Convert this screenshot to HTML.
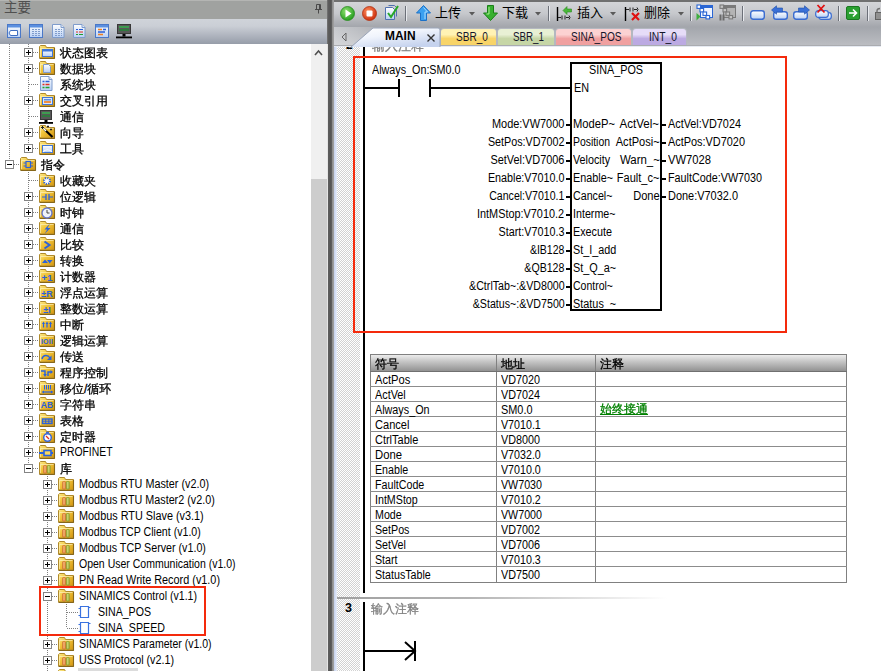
<!DOCTYPE html>
<html lang="zh"><head><meta charset="utf-8"><title>STEP 7-Micro/WIN SMART</title><style>
html,body{margin:0;padding:0;}
body{width:881px;height:671px;overflow:hidden;background:#fff;position:relative;
 font-family:"Liberation Sans","WenQuanYi Zen Hei",sans-serif;font-size:11px;color:#000;}
div,span,svg{position:absolute;box-sizing:border-box;}
svg{overflow:visible;}
.t{white-space:nowrap;line-height:14px;height:14px;}
.cj{font-family:"Liberation Sans","WenQuanYi Zen Hei",sans-serif;font-size:12px;-webkit-text-stroke:0.3px currentColor;}
.r{text-align:right;}
.yh{font-family:"Liberation Sans","Noto Sans CJK SC",sans-serif;font-size:13px;-webkit-text-stroke:0;}
</style></head><body>
<svg width="0" height="0" style="left:0;top:0"><defs>
<linearGradient id="gf" x1="0" y1="0" x2="1" y2="1"><stop offset="0" stop-color="#fbea90"/><stop offset="0.38" stop-color="#f3c73c"/><stop offset="1" stop-color="#d29410"/></linearGradient>
<linearGradient id="gb" x1="0" y1="0" x2="0" y2="1"><stop offset="0" stop-color="#ffffff"/><stop offset="1" stop-color="#b9d0f4"/></linearGradient>
<linearGradient id="gw" x1="0" y1="0" x2="0" y2="1"><stop offset="0" stop-color="#6fa0e8"/><stop offset="1" stop-color="#3b6fcc"/></linearGradient>
<radialGradient id="gg" cx="0.4" cy="0.35" r="0.7"><stop offset="0" stop-color="#8fe070"/><stop offset="1" stop-color="#1f9a1a"/></radialGradient>
<radialGradient id="gr" cx="0.4" cy="0.35" r="0.7"><stop offset="0" stop-color="#ff9060"/><stop offset="1" stop-color="#c82808"/></radialGradient>
<linearGradient id="gm" x1="0" y1="0" x2="0.6" y2="1"><stop offset="0" stop-color="#ffffff"/><stop offset="0.45" stop-color="#f0f4fc"/><stop offset="1" stop-color="#c6d3ee"/></linearGradient>
</defs></svg>
<div style="left:0px;top:0px;width:327px;height:19px;background:#a0a2a0;border-top:1px solid #b4b5b3;"></div>
<span class="t cj yh" style="left:4px;top:1px;color:#505050;font-size:13.5px;">主要</span>
<svg style="left:314px;top:3px" width="10" height="11" viewBox="0 0 10 11"><path d="M2.5 1.5h4v5h-4z M1 6.5h7 M4.5 6.5v4" fill="none" stroke="#4a4a4a" stroke-width="1"/><path d="M5.5 1.5v5" stroke="#4a4a4a" stroke-width="1"/></svg>
<div style="left:0px;top:19px;width:327px;height:25px;background:linear-gradient(#cfd3d9 0%,#cbcfd6 28%,#b2b7c1 62%,#969da9 100%);"></div>
<svg style="left:7px;top:24px" width="14" height="14" viewBox="0 0 14 14"><rect x="0.5" y="0.5" width="13" height="13" fill="url(#gb)" stroke="#4a78c8"/><rect x="1" y="1" width="12" height="2.5" fill="#5b8fe0"/><path d="M3.5 6.5h7v5h-7l-1.5-2.5z" fill="#fff" stroke="#3f6ec0"/></svg>
<svg style="left:29px;top:24px" width="14" height="14" viewBox="0 0 14 14"><rect x="0.5" y="0.5" width="13" height="13" fill="url(#gb)" stroke="#4a78c8"/><rect x="1" y="1" width="12" height="2.5" fill="#5b8fe0"/><path d="M3 5.5h8M3 7.5h8M3 9.5h8M3 11.5h8" stroke="#7f9ccc" stroke-width="1" stroke-dasharray="2 1"/></svg>
<svg style="left:52px;top:24px" width="13" height="14" viewBox="0 0 13 14"><path d="M0.5 0.5h8.5l3 3v10h-11.5z" fill="url(#gb)" stroke="#7f9ccc"/><path d="M9 0.5v3h3" fill="#dfe9fa" stroke="#7f9ccc"/><path d="M3 5.5h7M3 7.5h7M3 9.5h7M3 11.5h7" stroke="#7f9ccc" stroke-width="1" stroke-dasharray="2 1"/></svg>
<svg style="left:73px;top:24px" width="13" height="14" viewBox="0 0 13 14"><path d="M0.5 0.5h8.5l3 3v10h-11.5z" fill="url(#gb)" stroke="#7f9ccc"/><path d="M9 0.5v3h3" fill="#dfe9fa" stroke="#7f9ccc"/><path d="M3 5.5h2" stroke="#2a60d8"/><path d="M6 5.5h4" stroke="#2a60d8"/><path d="M3 8h2M6 8h4" stroke="#e03020"/><path d="M3 10.5h2M6 10.5h4" stroke="#20a030"/></svg>
<svg style="left:95px;top:24px" width="14" height="14" viewBox="0 0 14 14"><rect x="0.5" y="0.5" width="13" height="13" fill="url(#gb)" stroke="#4a78c8"/><rect x="1" y="1" width="12" height="2.5" fill="#5b8fe0"/><path d="M3 5.5h4M3 10.5h5" stroke="#f08020" stroke-width="1.4"/><path d="M8 5.5h3M3 8h7" stroke="#2a60d8" stroke-width="1.4"/></svg>
<svg style="left:116px;top:23px" width="16" height="16" viewBox="0 0 16 16"><rect x="1.5" y="1.5" width="13" height="9" fill="#585858" stroke="#383838"/><rect x="3" y="3" width="10" height="2" fill="#3e9c50"/><rect x="3" y="6" width="10" height="2" fill="#2f7a3e"/><rect x="6.5" y="11" width="3" height="2.5" fill="#000"/><rect x="0" y="13.5" width="16" height="1.8" fill="#000"/></svg>
<div style="left:0px;top:44px;width:327px;height:627px;background:#fff;"></div>
<div style="left:311px;top:44px;width:16px;height:627px;background:#f0f0f0;"></div>
<div style="left:311px;top:179px;width:16px;height:492px;background:#cdcdcd;"></div>
<svg style="left:314px;top:49px" width="9" height="8" viewBox="0 0 9 8"><path d="M1 6 L4.5 2 L8 6" fill="none" stroke="#505050" stroke-width="1.6"/></svg>
<div style="left:327px;top:0px;width:5px;height:671px;background:linear-gradient(90deg,#787878,#5c5c5c 30%,#565656 70%,#626262);"></div>
<div style="left:327px;top:44px;width:1px;height:627px;background:#e4e4e4;"></div>
<div style="left:332px;top:0px;width:2px;height:671px;background:linear-gradient(90deg,#888,#a4a4a4);"></div>
<div style="left:9px;top:44px;width:1px;height:120px;background-image:repeating-linear-gradient(180deg,#808080 0 1px,transparent 1px 2px);"></div>
<div style="left:28px;top:44px;width:1px;height:104px;background-image:repeating-linear-gradient(180deg,#808080 0 1px,transparent 1px 2px);"></div>
<div style="left:28px;top:172px;width:1px;height:296px;background-image:repeating-linear-gradient(180deg,#808080 0 1px,transparent 1px 2px);"></div>
<div style="left:47px;top:476px;width:1px;height:195px;background-image:repeating-linear-gradient(180deg,#808080 0 1px,transparent 1px 2px);"></div>
<div style="left:66px;top:604px;width:1px;height:24px;background-image:repeating-linear-gradient(180deg,#808080 0 1px,transparent 1px 2px);"></div>
<div style="left:29px;top:52px;width:10px;height:1px;background-image:repeating-linear-gradient(90deg,#808080 0 1px,transparent 1px 2px);"></div>
<svg style="left:24px;top:48px" width="9" height="9" viewBox="0 0 9 9"><rect x="0.5" y="0.5" width="8" height="8" fill="#fff" stroke="#848484"/><path d="M2 4.5h5 M4.5 2v5" stroke="#000" stroke-width="1"/></svg>
<svg style="left:39px;top:44px" width="16" height="16" viewBox="0 0 16 16"><path d="M0.5 2.5V14H15.5V3.5H7.5L6.5 1.5H1.5Z" fill="url(#gf)" stroke="#b08a2c" stroke-width="1"/><path d="M0.5 14.5H15.8M15.5 4V14.5" stroke="#86661a" stroke-width="1.1" fill="none"/><path d="M1.5 4.5H14.5M1.5 4.5V13" stroke="#fffbd8" stroke-width="1" opacity="0.55" fill="none"/><rect x="3.5" y="5.5" width="10" height="7" fill="url(#gb)" stroke="#3f76d8"/><rect x="4" y="6" width="9" height="1.5" fill="#3f76d8"/></svg>
<span class="t cj" style="left:60px;top:45.5px;">状态图表</span>
<div style="left:29px;top:68px;width:10px;height:1px;background-image:repeating-linear-gradient(90deg,#808080 0 1px,transparent 1px 2px);"></div>
<svg style="left:24px;top:64px" width="9" height="9" viewBox="0 0 9 9"><rect x="0.5" y="0.5" width="8" height="8" fill="#fff" stroke="#848484"/><path d="M2 4.5h5 M4.5 2v5" stroke="#000" stroke-width="1"/></svg>
<svg style="left:39px;top:60px" width="16" height="16" viewBox="0 0 16 16"><path d="M0.5 2.5V14H15.5V3.5H7.5L6.5 1.5H1.5Z" fill="url(#gf)" stroke="#b08a2c" stroke-width="1"/><path d="M0.5 14.5H15.8M15.5 4V14.5" stroke="#86661a" stroke-width="1.1" fill="none"/><path d="M1.5 4.5H14.5M1.5 4.5V13" stroke="#fffbd8" stroke-width="1" opacity="0.55" fill="none"/><path d="M4.5 4.5h5l2 2v6h-7z" fill="url(#gb)" stroke="#7f9ccc"/></svg>
<span class="t cj" style="left:60px;top:61.5px;">数据块</span>
<div style="left:29px;top:84px;width:10px;height:1px;background-image:repeating-linear-gradient(90deg,#808080 0 1px,transparent 1px 2px);"></div>
<svg style="left:40px;top:76px" width="13" height="15" viewBox="0 0 13 15"><path d="M0.5 0.5h8.5l3 3v11h-11.5z" fill="url(#gb)" stroke="#7f9ccc"/><path d="M9 0.5v3h3" fill="#dfe9fa" stroke="#7f9ccc"/><path d="M2.5 5.5h2M5.5 5.5h4" stroke="#2a60d8" stroke-width="1.3"/><path d="M2.5 8.5h2M5.5 8.5h4" stroke="#e03020" stroke-width="1.3"/><path d="M2.5 11.5h2M5.5 11.5h4" stroke="#20a030" stroke-width="1.3"/></svg>
<span class="t cj" style="left:60px;top:77.5px;">系统块</span>
<div style="left:29px;top:100px;width:10px;height:1px;background-image:repeating-linear-gradient(90deg,#808080 0 1px,transparent 1px 2px);"></div>
<svg style="left:24px;top:96px" width="9" height="9" viewBox="0 0 9 9"><rect x="0.5" y="0.5" width="8" height="8" fill="#fff" stroke="#848484"/><path d="M2 4.5h5 M4.5 2v5" stroke="#000" stroke-width="1"/></svg>
<svg style="left:39px;top:92px" width="16" height="16" viewBox="0 0 16 16"><path d="M0.5 2.5V14H15.5V3.5H7.5L6.5 1.5H1.5Z" fill="url(#gf)" stroke="#b08a2c" stroke-width="1"/><path d="M0.5 14.5H15.8M15.5 4V14.5" stroke="#86661a" stroke-width="1.1" fill="none"/><path d="M1.5 4.5H14.5M1.5 4.5V13" stroke="#fffbd8" stroke-width="1" opacity="0.55" fill="none"/><rect x="3.5" y="5.5" width="10" height="7" fill="#dce8fb" stroke="#3f76d8"/><rect x="5" y="9" width="7" height="2" fill="#f09040"/><rect x="5" y="7" width="7" height="1.5" fill="#5b8fe0"/></svg>
<span class="t cj" style="left:60px;top:93.5px;">交叉引用</span>
<div style="left:29px;top:116px;width:10px;height:1px;background-image:repeating-linear-gradient(90deg,#808080 0 1px,transparent 1px 2px);"></div>
<svg style="left:38px;top:109px" width="16" height="16" viewBox="0 0 16 16"><rect x="2.5" y="1.5" width="11" height="9" fill="#585858" stroke="#383838"/><rect x="4" y="3" width="8" height="2" fill="#3e9c50"/><rect x="4" y="6" width="8" height="2" fill="#2f7a3e"/><rect x="6.5" y="11" width="3" height="2.5" fill="#000"/><rect x="1" y="13" width="14" height="1.8" fill="#000"/></svg>
<span class="t cj" style="left:60px;top:109.5px;">通信</span>
<div style="left:29px;top:132px;width:10px;height:1px;background-image:repeating-linear-gradient(90deg,#808080 0 1px,transparent 1px 2px);"></div>
<svg style="left:24px;top:128px" width="9" height="9" viewBox="0 0 9 9"><rect x="0.5" y="0.5" width="8" height="8" fill="#fff" stroke="#848484"/><path d="M2 4.5h5 M4.5 2v5" stroke="#000" stroke-width="1"/></svg>
<svg style="left:39px;top:124px" width="16" height="16" viewBox="0 0 16 16"><path d="M0.5 2.5V14H15.5V3.5H7.5L6.5 1.5H1.5Z" fill="url(#gf)" stroke="#b08a2c" stroke-width="1"/><path d="M0.5 14.5H15.8M15.5 4V14.5" stroke="#86661a" stroke-width="1.1" fill="none"/><path d="M1.5 4.5H14.5M1.5 4.5V13" stroke="#fffbd8" stroke-width="1" opacity="0.55" fill="none"/><path d="M5 5L13.5 13" stroke="#000" stroke-width="2.2"/><path d="M5 5L7 7" stroke="#fff" stroke-width="1.6"/><path d="M2 3.5h3M3.5 2v3M8 2.5h2M9 1.5v2M11 5.5h2M12 4.5v2" stroke="#222" stroke-width="1"/></svg>
<span class="t cj" style="left:60px;top:125.5px;">向导</span>
<div style="left:29px;top:148px;width:10px;height:1px;background-image:repeating-linear-gradient(90deg,#808080 0 1px,transparent 1px 2px);"></div>
<svg style="left:24px;top:144px" width="9" height="9" viewBox="0 0 9 9"><rect x="0.5" y="0.5" width="8" height="8" fill="#fff" stroke="#848484"/><path d="M2 4.5h5 M4.5 2v5" stroke="#000" stroke-width="1"/></svg>
<svg style="left:39px;top:140px" width="16" height="16" viewBox="0 0 16 16"><path d="M0.5 2.5V14H15.5V3.5H7.5L6.5 1.5H1.5Z" fill="url(#gf)" stroke="#b08a2c" stroke-width="1"/><path d="M0.5 14.5H15.8M15.5 4V14.5" stroke="#86661a" stroke-width="1.1" fill="none"/><path d="M1.5 4.5H14.5M1.5 4.5V13" stroke="#fffbd8" stroke-width="1" opacity="0.55" fill="none"/><rect x="3.5" y="5.5" width="10" height="7" fill="url(#gb)" stroke="#3f76d8"/><path d="M4 12C6 9 11 9 13 12" fill="none" stroke="#fff" stroke-width="1.2"/></svg>
<span class="t cj" style="left:60px;top:141.5px;">工具</span>
<div style="left:10px;top:164px;width:10px;height:1px;background-image:repeating-linear-gradient(90deg,#808080 0 1px,transparent 1px 2px);"></div>
<svg style="left:5px;top:160px" width="9" height="9" viewBox="0 0 9 9"><rect x="0.5" y="0.5" width="8" height="8" fill="#fff" stroke="#848484"/><path d="M2 4.5h5" stroke="#000" stroke-width="1"/></svg>
<svg style="left:20px;top:156px" width="16" height="16" viewBox="0 0 16 16"><path d="M0.5 2.5V14H15.5V3.5H7.5L6.5 1.5H1.5Z" fill="url(#gf)" stroke="#b08a2c" stroke-width="1"/><path d="M0.5 14.5H15.8M15.5 4V14.5" stroke="#86661a" stroke-width="1.1" fill="none"/><path d="M1.5 4.5H14.5M1.5 4.5V13" stroke="#fffbd8" stroke-width="1" opacity="0.55" fill="none"/><rect x="6" y="5.5" width="4.5" height="6" fill="none" stroke="#2a62dc" stroke-width="1.2"/><path d="M3.5 7h2.5M3.5 10h2.5M10.5 7H13M10.5 10H13" stroke="#2a62dc" stroke-width="1.1"/></svg>
<span class="t cj" style="left:41px;top:157.5px;">指令</span>
<div style="left:29px;top:180px;width:10px;height:1px;background-image:repeating-linear-gradient(90deg,#808080 0 1px,transparent 1px 2px);"></div>
<svg style="left:39px;top:172px" width="16" height="16" viewBox="0 0 16 16"><path d="M0.5 2.5V14H15.5V3.5H7.5L6.5 1.5H1.5Z" fill="url(#gf)" stroke="#b08a2c" stroke-width="1"/><path d="M0.5 14.5H15.8M15.5 4V14.5" stroke="#86661a" stroke-width="1.1" fill="none"/><path d="M1.5 4.5H14.5M1.5 4.5V13" stroke="#fffbd8" stroke-width="1" opacity="0.55" fill="none"/><circle cx="8" cy="9" r="3" fill="#fff" stroke="#2a62dc" stroke-width="2.2" stroke-dasharray="1.1 1.25"/></svg>
<span class="t cj" style="left:60px;top:173.5px;">收藏夹</span>
<div style="left:29px;top:196px;width:10px;height:1px;background-image:repeating-linear-gradient(90deg,#808080 0 1px,transparent 1px 2px);"></div>
<svg style="left:24px;top:192px" width="9" height="9" viewBox="0 0 9 9"><rect x="0.5" y="0.5" width="8" height="8" fill="#fff" stroke="#848484"/><path d="M2 4.5h5 M4.5 2v5" stroke="#000" stroke-width="1"/></svg>
<svg style="left:39px;top:188px" width="16" height="16" viewBox="0 0 16 16"><path d="M0.5 2.5V14H15.5V3.5H7.5L6.5 1.5H1.5Z" fill="url(#gf)" stroke="#b08a2c" stroke-width="1"/><path d="M0.5 14.5H15.8M15.5 4V14.5" stroke="#86661a" stroke-width="1.1" fill="none"/><path d="M1.5 4.5H14.5M1.5 4.5V13" stroke="#fffbd8" stroke-width="1" opacity="0.55" fill="none"/><path d="M3 9h4M10 9h4" stroke="#2a62dc" stroke-width="1.2"/><path d="M7 6v6M10 6v6" stroke="#2a62dc" stroke-width="1.3"/></svg>
<span class="t cj" style="left:60px;top:189.5px;">位逻辑</span>
<div style="left:29px;top:212px;width:10px;height:1px;background-image:repeating-linear-gradient(90deg,#808080 0 1px,transparent 1px 2px);"></div>
<svg style="left:24px;top:208px" width="9" height="9" viewBox="0 0 9 9"><rect x="0.5" y="0.5" width="8" height="8" fill="#fff" stroke="#848484"/><path d="M2 4.5h5 M4.5 2v5" stroke="#000" stroke-width="1"/></svg>
<svg style="left:39px;top:204px" width="16" height="16" viewBox="0 0 16 16"><path d="M0.5 2.5V14H15.5V3.5H7.5L6.5 1.5H1.5Z" fill="url(#gf)" stroke="#b08a2c" stroke-width="1"/><path d="M0.5 14.5H15.8M15.5 4V14.5" stroke="#86661a" stroke-width="1.1" fill="none"/><path d="M1.5 4.5H14.5M1.5 4.5V13" stroke="#fffbd8" stroke-width="1" opacity="0.55" fill="none"/><circle cx="8" cy="9" r="5" fill="#eef2fb" stroke="#6878c8" stroke-width="1.4"/><path d="M8 6v3h2.5" fill="none" stroke="#444" stroke-width="1"/></svg>
<span class="t cj" style="left:60px;top:205.5px;">时钟</span>
<div style="left:29px;top:228px;width:10px;height:1px;background-image:repeating-linear-gradient(90deg,#808080 0 1px,transparent 1px 2px);"></div>
<svg style="left:24px;top:224px" width="9" height="9" viewBox="0 0 9 9"><rect x="0.5" y="0.5" width="8" height="8" fill="#fff" stroke="#848484"/><path d="M2 4.5h5 M4.5 2v5" stroke="#000" stroke-width="1"/></svg>
<svg style="left:39px;top:220px" width="16" height="16" viewBox="0 0 16 16"><path d="M0.5 2.5V14H15.5V3.5H7.5L6.5 1.5H1.5Z" fill="url(#gf)" stroke="#b08a2c" stroke-width="1"/><path d="M0.5 14.5H15.8M15.5 4V14.5" stroke="#86661a" stroke-width="1.1" fill="none"/><path d="M1.5 4.5H14.5M1.5 4.5V13" stroke="#fffbd8" stroke-width="1" opacity="0.55" fill="none"/><path d="M11 3.5L5.5 9.5H8.3L5.5 14L11.5 8H8.5Z" fill="#2a62dc"/></svg>
<span class="t cj" style="left:60px;top:221.5px;">通信</span>
<div style="left:29px;top:244px;width:10px;height:1px;background-image:repeating-linear-gradient(90deg,#808080 0 1px,transparent 1px 2px);"></div>
<svg style="left:24px;top:240px" width="9" height="9" viewBox="0 0 9 9"><rect x="0.5" y="0.5" width="8" height="8" fill="#fff" stroke="#848484"/><path d="M2 4.5h5 M4.5 2v5" stroke="#000" stroke-width="1"/></svg>
<svg style="left:39px;top:236px" width="16" height="16" viewBox="0 0 16 16"><path d="M0.5 2.5V14H15.5V3.5H7.5L6.5 1.5H1.5Z" fill="url(#gf)" stroke="#b08a2c" stroke-width="1"/><path d="M0.5 14.5H15.8M15.5 4V14.5" stroke="#86661a" stroke-width="1.1" fill="none"/><path d="M1.5 4.5H14.5M1.5 4.5V13" stroke="#fffbd8" stroke-width="1" opacity="0.55" fill="none"/><path d="M5.5 5.5L10.5 9L5.5 12.5" fill="none" stroke="#2a62dc" stroke-width="2"/></svg>
<span class="t cj" style="left:60px;top:237.5px;">比较</span>
<div style="left:29px;top:260px;width:10px;height:1px;background-image:repeating-linear-gradient(90deg,#808080 0 1px,transparent 1px 2px);"></div>
<svg style="left:24px;top:256px" width="9" height="9" viewBox="0 0 9 9"><rect x="0.5" y="0.5" width="8" height="8" fill="#fff" stroke="#848484"/><path d="M2 4.5h5 M4.5 2v5" stroke="#000" stroke-width="1"/></svg>
<svg style="left:39px;top:252px" width="16" height="16" viewBox="0 0 16 16"><path d="M0.5 2.5V14H15.5V3.5H7.5L6.5 1.5H1.5Z" fill="url(#gf)" stroke="#b08a2c" stroke-width="1"/><path d="M0.5 14.5H15.8M15.5 4V14.5" stroke="#86661a" stroke-width="1.1" fill="none"/><path d="M1.5 4.5H14.5M1.5 4.5V13" stroke="#fffbd8" stroke-width="1" opacity="0.55" fill="none"/><path d="M3 11L6 7.5L9 11Z M8 8L13.5 8L10.7 11.5Z" fill="#2a62dc"/></svg>
<span class="t cj" style="left:60px;top:253.5px;">转换</span>
<div style="left:29px;top:276px;width:10px;height:1px;background-image:repeating-linear-gradient(90deg,#808080 0 1px,transparent 1px 2px);"></div>
<svg style="left:24px;top:272px" width="9" height="9" viewBox="0 0 9 9"><rect x="0.5" y="0.5" width="8" height="8" fill="#fff" stroke="#848484"/><path d="M2 4.5h5 M4.5 2v5" stroke="#000" stroke-width="1"/></svg>
<svg style="left:39px;top:268px" width="16" height="16" viewBox="0 0 16 16"><path d="M0.5 2.5V14H15.5V3.5H7.5L6.5 1.5H1.5Z" fill="url(#gf)" stroke="#b08a2c" stroke-width="1"/><path d="M0.5 14.5H15.8M15.5 4V14.5" stroke="#86661a" stroke-width="1.1" fill="none"/><path d="M1.5 4.5H14.5M1.5 4.5V13" stroke="#fffbd8" stroke-width="1" opacity="0.55" fill="none"/><text x="8" y="12.5" text-anchor="middle" font-family="Liberation Sans,sans-serif" font-weight="bold" font-size="9.5" fill="#2a62dc" letter-spacing="0">+1</text></svg>
<span class="t cj" style="left:60px;top:269.5px;">计数器</span>
<div style="left:29px;top:292px;width:10px;height:1px;background-image:repeating-linear-gradient(90deg,#808080 0 1px,transparent 1px 2px);"></div>
<svg style="left:24px;top:288px" width="9" height="9" viewBox="0 0 9 9"><rect x="0.5" y="0.5" width="8" height="8" fill="#fff" stroke="#848484"/><path d="M2 4.5h5 M4.5 2v5" stroke="#000" stroke-width="1"/></svg>
<svg style="left:39px;top:284px" width="16" height="16" viewBox="0 0 16 16"><path d="M0.5 2.5V14H15.5V3.5H7.5L6.5 1.5H1.5Z" fill="url(#gf)" stroke="#b08a2c" stroke-width="1"/><path d="M0.5 14.5H15.8M15.5 4V14.5" stroke="#86661a" stroke-width="1.1" fill="none"/><path d="M1.5 4.5H14.5M1.5 4.5V13" stroke="#fffbd8" stroke-width="1" opacity="0.55" fill="none"/><text x="8" y="12.5" text-anchor="middle" font-family="Liberation Sans,sans-serif" font-weight="bold" font-size="9" fill="#2a62dc" letter-spacing="0">±R</text></svg>
<span class="t cj" style="left:60px;top:285.5px;">浮点运算</span>
<div style="left:29px;top:308px;width:10px;height:1px;background-image:repeating-linear-gradient(90deg,#808080 0 1px,transparent 1px 2px);"></div>
<svg style="left:24px;top:304px" width="9" height="9" viewBox="0 0 9 9"><rect x="0.5" y="0.5" width="8" height="8" fill="#fff" stroke="#848484"/><path d="M2 4.5h5 M4.5 2v5" stroke="#000" stroke-width="1"/></svg>
<svg style="left:39px;top:300px" width="16" height="16" viewBox="0 0 16 16"><path d="M0.5 2.5V14H15.5V3.5H7.5L6.5 1.5H1.5Z" fill="url(#gf)" stroke="#b08a2c" stroke-width="1"/><path d="M0.5 14.5H15.8M15.5 4V14.5" stroke="#86661a" stroke-width="1.1" fill="none"/><path d="M1.5 4.5H14.5M1.5 4.5V13" stroke="#fffbd8" stroke-width="1" opacity="0.55" fill="none"/><text x="8" y="12.5" text-anchor="middle" font-family="Liberation Sans,sans-serif" font-weight="bold" font-size="9" fill="#2a62dc" letter-spacing="0">±I</text></svg>
<span class="t cj" style="left:60px;top:301.5px;">整数运算</span>
<div style="left:29px;top:324px;width:10px;height:1px;background-image:repeating-linear-gradient(90deg,#808080 0 1px,transparent 1px 2px);"></div>
<svg style="left:24px;top:320px" width="9" height="9" viewBox="0 0 9 9"><rect x="0.5" y="0.5" width="8" height="8" fill="#fff" stroke="#848484"/><path d="M2 4.5h5 M4.5 2v5" stroke="#000" stroke-width="1"/></svg>
<svg style="left:39px;top:316px" width="16" height="16" viewBox="0 0 16 16"><path d="M0.5 2.5V14H15.5V3.5H7.5L6.5 1.5H1.5Z" fill="url(#gf)" stroke="#b08a2c" stroke-width="1"/><path d="M0.5 14.5H15.8M15.5 4V14.5" stroke="#86661a" stroke-width="1.1" fill="none"/><path d="M1.5 4.5H14.5M1.5 4.5V13" stroke="#fffbd8" stroke-width="1" opacity="0.55" fill="none"/><path d="M4.5 11.5V7M8 11.5V7M11.5 11.5V7" stroke="#2a62dc" stroke-width="1.2"/><path d="M3 8L4.5 5.5L6 8ZM6.5 8L8 5.5L9.5 8ZM10 8L11.5 5.5L13 8Z" fill="#2a62dc"/></svg>
<span class="t cj" style="left:60px;top:317.5px;">中断</span>
<div style="left:29px;top:340px;width:10px;height:1px;background-image:repeating-linear-gradient(90deg,#808080 0 1px,transparent 1px 2px);"></div>
<svg style="left:24px;top:336px" width="9" height="9" viewBox="0 0 9 9"><rect x="0.5" y="0.5" width="8" height="8" fill="#fff" stroke="#848484"/><path d="M2 4.5h5 M4.5 2v5" stroke="#000" stroke-width="1"/></svg>
<svg style="left:39px;top:332px" width="16" height="16" viewBox="0 0 16 16"><path d="M0.5 2.5V14H15.5V3.5H7.5L6.5 1.5H1.5Z" fill="url(#gf)" stroke="#b08a2c" stroke-width="1"/><path d="M0.5 14.5H15.8M15.5 4V14.5" stroke="#86661a" stroke-width="1.1" fill="none"/><path d="M1.5 4.5H14.5M1.5 4.5V13" stroke="#fffbd8" stroke-width="1" opacity="0.55" fill="none"/><text x="8" y="12" text-anchor="middle" font-family="Liberation Sans,sans-serif" font-weight="bold" font-size="7" fill="#2a62dc" letter-spacing="0.2">IOII</text></svg>
<span class="t cj" style="left:60px;top:333.5px;">逻辑运算</span>
<div style="left:29px;top:356px;width:10px;height:1px;background-image:repeating-linear-gradient(90deg,#808080 0 1px,transparent 1px 2px);"></div>
<svg style="left:24px;top:352px" width="9" height="9" viewBox="0 0 9 9"><rect x="0.5" y="0.5" width="8" height="8" fill="#fff" stroke="#848484"/><path d="M2 4.5h5 M4.5 2v5" stroke="#000" stroke-width="1"/></svg>
<svg style="left:39px;top:348px" width="16" height="16" viewBox="0 0 16 16"><path d="M0.5 2.5V14H15.5V3.5H7.5L6.5 1.5H1.5Z" fill="url(#gf)" stroke="#b08a2c" stroke-width="1"/><path d="M0.5 14.5H15.8M15.5 4V14.5" stroke="#86661a" stroke-width="1.1" fill="none"/><path d="M1.5 4.5H14.5M1.5 4.5V13" stroke="#fffbd8" stroke-width="1" opacity="0.55" fill="none"/><path d="M3 11C4 6.5 9 6.5 11 10" fill="none" stroke="#2a62dc" stroke-width="1.4"/><path d="M12.5 7.5V12H8Z" fill="#2a62dc"/></svg>
<span class="t cj" style="left:60px;top:349.5px;">传送</span>
<div style="left:29px;top:372px;width:10px;height:1px;background-image:repeating-linear-gradient(90deg,#808080 0 1px,transparent 1px 2px);"></div>
<svg style="left:24px;top:368px" width="9" height="9" viewBox="0 0 9 9"><rect x="0.5" y="0.5" width="8" height="8" fill="#fff" stroke="#848484"/><path d="M2 4.5h5 M4.5 2v5" stroke="#000" stroke-width="1"/></svg>
<svg style="left:39px;top:364px" width="16" height="16" viewBox="0 0 16 16"><path d="M0.5 2.5V14H15.5V3.5H7.5L6.5 1.5H1.5Z" fill="url(#gf)" stroke="#b08a2c" stroke-width="1"/><path d="M0.5 14.5H15.8M15.5 4V14.5" stroke="#86661a" stroke-width="1.1" fill="none"/><path d="M1.5 4.5H14.5M1.5 4.5V13" stroke="#fffbd8" stroke-width="1" opacity="0.55" fill="none"/><path d="M2 7h4v4M9 12V8h3" fill="none" stroke="#2a62dc" stroke-width="1.4"/><path d="M4.2 10L6 13L7.8 10ZM11.5 6L14 8L11.5 10Z" fill="#2a62dc"/></svg>
<span class="t cj" style="left:60px;top:365.5px;">程序控制</span>
<div style="left:29px;top:388px;width:10px;height:1px;background-image:repeating-linear-gradient(90deg,#808080 0 1px,transparent 1px 2px);"></div>
<svg style="left:24px;top:384px" width="9" height="9" viewBox="0 0 9 9"><rect x="0.5" y="0.5" width="8" height="8" fill="#fff" stroke="#848484"/><path d="M2 4.5h5 M4.5 2v5" stroke="#000" stroke-width="1"/></svg>
<svg style="left:39px;top:380px" width="16" height="16" viewBox="0 0 16 16"><path d="M0.5 2.5V14H15.5V3.5H7.5L6.5 1.5H1.5Z" fill="url(#gf)" stroke="#b08a2c" stroke-width="1"/><path d="M0.5 14.5H15.8M15.5 4V14.5" stroke="#86661a" stroke-width="1.1" fill="none"/><path d="M1.5 4.5H14.5M1.5 4.5V13" stroke="#fffbd8" stroke-width="1" opacity="0.55" fill="none"/><path d="M5.5 5v4.5M7.5 5v4.5M9.5 5v4.5M11.5 5v4.5" stroke="#2a62dc" stroke-width="1"/><path d="M4 12H13" stroke="#2a62dc" stroke-width="1.2"/><path d="M5 10.5L2.5 12L5 13.5ZM12 10.5L14.5 12L12 13.5Z" fill="#2a62dc"/></svg>
<span class="t cj" style="left:60px;top:381.5px;">移位/循环</span>
<div style="left:29px;top:404px;width:10px;height:1px;background-image:repeating-linear-gradient(90deg,#808080 0 1px,transparent 1px 2px);"></div>
<svg style="left:24px;top:400px" width="9" height="9" viewBox="0 0 9 9"><rect x="0.5" y="0.5" width="8" height="8" fill="#fff" stroke="#848484"/><path d="M2 4.5h5 M4.5 2v5" stroke="#000" stroke-width="1"/></svg>
<svg style="left:39px;top:396px" width="16" height="16" viewBox="0 0 16 16"><path d="M0.5 2.5V14H15.5V3.5H7.5L6.5 1.5H1.5Z" fill="url(#gf)" stroke="#b08a2c" stroke-width="1"/><path d="M0.5 14.5H15.8M15.5 4V14.5" stroke="#86661a" stroke-width="1.1" fill="none"/><path d="M1.5 4.5H14.5M1.5 4.5V13" stroke="#fffbd8" stroke-width="1" opacity="0.55" fill="none"/><text x="8" y="12" text-anchor="middle" font-family="Liberation Sans,sans-serif" font-weight="bold" font-size="8.5" fill="#2a62dc" letter-spacing="0">AB</text></svg>
<span class="t cj" style="left:60px;top:397.5px;">字符串</span>
<div style="left:29px;top:420px;width:10px;height:1px;background-image:repeating-linear-gradient(90deg,#808080 0 1px,transparent 1px 2px);"></div>
<svg style="left:24px;top:416px" width="9" height="9" viewBox="0 0 9 9"><rect x="0.5" y="0.5" width="8" height="8" fill="#fff" stroke="#848484"/><path d="M2 4.5h5 M4.5 2v5" stroke="#000" stroke-width="1"/></svg>
<svg style="left:39px;top:412px" width="16" height="16" viewBox="0 0 16 16"><path d="M0.5 2.5V14H15.5V3.5H7.5L6.5 1.5H1.5Z" fill="url(#gf)" stroke="#b08a2c" stroke-width="1"/><path d="M0.5 14.5H15.8M15.5 4V14.5" stroke="#86661a" stroke-width="1.1" fill="none"/><path d="M1.5 4.5H14.5M1.5 4.5V13" stroke="#fffbd8" stroke-width="1" opacity="0.55" fill="none"/><rect x="3.5" y="7" width="9.5" height="4.5" fill="none" stroke="#2a62dc" stroke-width="1.4"/><path d="M6.7 7v4.5M9.8 7v4.5M3.5 9.2h9.5" stroke="#2a62dc" stroke-width="1"/></svg>
<span class="t cj" style="left:60px;top:413.5px;">表格</span>
<div style="left:29px;top:436px;width:10px;height:1px;background-image:repeating-linear-gradient(90deg,#808080 0 1px,transparent 1px 2px);"></div>
<svg style="left:24px;top:432px" width="9" height="9" viewBox="0 0 9 9"><rect x="0.5" y="0.5" width="8" height="8" fill="#fff" stroke="#848484"/><path d="M2 4.5h5 M4.5 2v5" stroke="#000" stroke-width="1"/></svg>
<svg style="left:39px;top:428px" width="16" height="16" viewBox="0 0 16 16"><path d="M0.5 2.5V14H15.5V3.5H7.5L6.5 1.5H1.5Z" fill="url(#gf)" stroke="#b08a2c" stroke-width="1"/><path d="M0.5 14.5H15.8M15.5 4V14.5" stroke="#86661a" stroke-width="1.1" fill="none"/><path d="M1.5 4.5H14.5M1.5 4.5V13" stroke="#fffbd8" stroke-width="1" opacity="0.55" fill="none"/><circle cx="8.5" cy="9.5" r="3.8" fill="#fff" stroke="#3a68d8" stroke-width="1.5"/><path d="M7 4.5h3" stroke="#3a68d8" stroke-width="1.5"/><path d="M7 8L10 11" stroke="#e03020" stroke-width="1.2"/></svg>
<span class="t cj" style="left:60px;top:429.5px;">定时器</span>
<div style="left:29px;top:452px;width:10px;height:1px;background-image:repeating-linear-gradient(90deg,#808080 0 1px,transparent 1px 2px);"></div>
<svg style="left:24px;top:448px" width="9" height="9" viewBox="0 0 9 9"><rect x="0.5" y="0.5" width="8" height="8" fill="#fff" stroke="#848484"/><path d="M2 4.5h5 M4.5 2v5" stroke="#000" stroke-width="1"/></svg>
<svg style="left:39px;top:444px" width="16" height="16" viewBox="0 0 16 16"><path d="M0.5 2.5V14H15.5V3.5H7.5L6.5 1.5H1.5Z" fill="url(#gf)" stroke="#b08a2c" stroke-width="1"/><path d="M0.5 14.5H15.8M15.5 4V14.5" stroke="#86661a" stroke-width="1.1" fill="none"/><path d="M1.5 4.5H14.5M1.5 4.5V13" stroke="#fffbd8" stroke-width="1" opacity="0.55" fill="none"/><rect x="5" y="6.5" width="7" height="5" fill="#f8d860" stroke="#2a62dc" stroke-width="1.6"/><path d="M0 9H5M12 9H14" stroke="#2a62dc" stroke-width="1.8"/></svg>
<span class="t" style="left:59.7px;top:445px;font-size:12px;transform:scaleX(0.865);transform-origin:0 50%;">PROFINET</span>
<div style="left:29px;top:468px;width:10px;height:1px;background-image:repeating-linear-gradient(90deg,#808080 0 1px,transparent 1px 2px);"></div>
<svg style="left:24px;top:464px" width="9" height="9" viewBox="0 0 9 9"><rect x="0.5" y="0.5" width="8" height="8" fill="#fff" stroke="#848484"/><path d="M2 4.5h5" stroke="#000" stroke-width="1"/></svg>
<svg style="left:39px;top:460px" width="16" height="16" viewBox="0 0 16 16"><path d="M0.5 2.5V14H15.5V3.5H7.5L6.5 1.5H1.5Z" fill="url(#gf)" stroke="#b08a2c" stroke-width="1"/><path d="M0.5 14.5H15.8M15.5 4V14.5" stroke="#86661a" stroke-width="1.1" fill="none"/><path d="M1.5 4.5H14.5M1.5 4.5V13" stroke="#fffbd8" stroke-width="1" opacity="0.55" fill="none"/><g opacity="0.8"><rect x="4.5" y="5.5" width="3" height="7.5" rx="0.8" fill="#e87050" stroke="#b85030" stroke-width="0.5"/><rect x="8.3" y="5.5" width="3" height="7.5" rx="0.8" fill="#88bc50" stroke="#5a8c30" stroke-width="0.5"/><path d="M6 6v6.5M9.8 6v6.5" stroke="#f8e8a0" stroke-width="0.8"/></g></svg>
<span class="t cj" style="left:60px;top:461.5px;">库</span>
<div style="left:48px;top:484px;width:10px;height:1px;background-image:repeating-linear-gradient(90deg,#808080 0 1px,transparent 1px 2px);"></div>
<svg style="left:43px;top:480px" width="9" height="9" viewBox="0 0 9 9"><rect x="0.5" y="0.5" width="8" height="8" fill="#fff" stroke="#848484"/><path d="M2 4.5h5 M4.5 2v5" stroke="#000" stroke-width="1"/></svg>
<svg style="left:58px;top:476px" width="16" height="16" viewBox="0 0 16 16"><path d="M0.5 2.5V14H15.5V3.5H7.5L6.5 1.5H1.5Z" fill="url(#gf)" stroke="#b08a2c" stroke-width="1"/><path d="M0.5 14.5H15.8M15.5 4V14.5" stroke="#86661a" stroke-width="1.1" fill="none"/><path d="M1.5 4.5H14.5M1.5 4.5V13" stroke="#fffbd8" stroke-width="1" opacity="0.55" fill="none"/><g opacity="0.8"><rect x="4.5" y="5.5" width="3" height="7.5" rx="0.8" fill="#e87050" stroke="#b85030" stroke-width="0.5"/><rect x="8.3" y="5.5" width="3" height="7.5" rx="0.8" fill="#88bc50" stroke="#5a8c30" stroke-width="0.5"/><path d="M6 6v6.5M9.8 6v6.5" stroke="#f8e8a0" stroke-width="0.8"/></g></svg>
<span class="t" style="left:78.7px;top:477px;font-size:12px;transform:scaleX(0.900);transform-origin:0 50%;">Modbus RTU Master (v2.0)</span>
<div style="left:48px;top:500px;width:10px;height:1px;background-image:repeating-linear-gradient(90deg,#808080 0 1px,transparent 1px 2px);"></div>
<svg style="left:43px;top:496px" width="9" height="9" viewBox="0 0 9 9"><rect x="0.5" y="0.5" width="8" height="8" fill="#fff" stroke="#848484"/><path d="M2 4.5h5 M4.5 2v5" stroke="#000" stroke-width="1"/></svg>
<svg style="left:58px;top:492px" width="16" height="16" viewBox="0 0 16 16"><path d="M0.5 2.5V14H15.5V3.5H7.5L6.5 1.5H1.5Z" fill="url(#gf)" stroke="#b08a2c" stroke-width="1"/><path d="M0.5 14.5H15.8M15.5 4V14.5" stroke="#86661a" stroke-width="1.1" fill="none"/><path d="M1.5 4.5H14.5M1.5 4.5V13" stroke="#fffbd8" stroke-width="1" opacity="0.55" fill="none"/><g opacity="0.8"><rect x="4.5" y="5.5" width="3" height="7.5" rx="0.8" fill="#e87050" stroke="#b85030" stroke-width="0.5"/><rect x="8.3" y="5.5" width="3" height="7.5" rx="0.8" fill="#88bc50" stroke="#5a8c30" stroke-width="0.5"/><path d="M6 6v6.5M9.8 6v6.5" stroke="#f8e8a0" stroke-width="0.8"/></g></svg>
<span class="t" style="left:78.7px;top:493px;font-size:12px;transform:scaleX(0.898);transform-origin:0 50%;">Modbus RTU Master2 (v2.0)</span>
<div style="left:48px;top:516px;width:10px;height:1px;background-image:repeating-linear-gradient(90deg,#808080 0 1px,transparent 1px 2px);"></div>
<svg style="left:43px;top:512px" width="9" height="9" viewBox="0 0 9 9"><rect x="0.5" y="0.5" width="8" height="8" fill="#fff" stroke="#848484"/><path d="M2 4.5h5 M4.5 2v5" stroke="#000" stroke-width="1"/></svg>
<svg style="left:58px;top:508px" width="16" height="16" viewBox="0 0 16 16"><path d="M0.5 2.5V14H15.5V3.5H7.5L6.5 1.5H1.5Z" fill="url(#gf)" stroke="#b08a2c" stroke-width="1"/><path d="M0.5 14.5H15.8M15.5 4V14.5" stroke="#86661a" stroke-width="1.1" fill="none"/><path d="M1.5 4.5H14.5M1.5 4.5V13" stroke="#fffbd8" stroke-width="1" opacity="0.55" fill="none"/><g opacity="0.8"><rect x="4.5" y="5.5" width="3" height="7.5" rx="0.8" fill="#e87050" stroke="#b85030" stroke-width="0.5"/><rect x="8.3" y="5.5" width="3" height="7.5" rx="0.8" fill="#88bc50" stroke="#5a8c30" stroke-width="0.5"/><path d="M6 6v6.5M9.8 6v6.5" stroke="#f8e8a0" stroke-width="0.8"/></g></svg>
<span class="t" style="left:78.7px;top:509px;font-size:12px;transform:scaleX(0.905);transform-origin:0 50%;">Modbus RTU Slave (v3.1)</span>
<div style="left:48px;top:532px;width:10px;height:1px;background-image:repeating-linear-gradient(90deg,#808080 0 1px,transparent 1px 2px);"></div>
<svg style="left:43px;top:528px" width="9" height="9" viewBox="0 0 9 9"><rect x="0.5" y="0.5" width="8" height="8" fill="#fff" stroke="#848484"/><path d="M2 4.5h5 M4.5 2v5" stroke="#000" stroke-width="1"/></svg>
<svg style="left:58px;top:524px" width="16" height="16" viewBox="0 0 16 16"><path d="M0.5 2.5V14H15.5V3.5H7.5L6.5 1.5H1.5Z" fill="url(#gf)" stroke="#b08a2c" stroke-width="1"/><path d="M0.5 14.5H15.8M15.5 4V14.5" stroke="#86661a" stroke-width="1.1" fill="none"/><path d="M1.5 4.5H14.5M1.5 4.5V13" stroke="#fffbd8" stroke-width="1" opacity="0.55" fill="none"/><g opacity="0.8"><rect x="4.5" y="5.5" width="3" height="7.5" rx="0.8" fill="#e87050" stroke="#b85030" stroke-width="0.5"/><rect x="8.3" y="5.5" width="3" height="7.5" rx="0.8" fill="#88bc50" stroke="#5a8c30" stroke-width="0.5"/><path d="M6 6v6.5M9.8 6v6.5" stroke="#f8e8a0" stroke-width="0.8"/></g></svg>
<span class="t" style="left:78.7px;top:525px;font-size:12px;transform:scaleX(0.885);transform-origin:0 50%;">Modbus TCP Client (v1.0)</span>
<div style="left:48px;top:548px;width:10px;height:1px;background-image:repeating-linear-gradient(90deg,#808080 0 1px,transparent 1px 2px);"></div>
<svg style="left:43px;top:544px" width="9" height="9" viewBox="0 0 9 9"><rect x="0.5" y="0.5" width="8" height="8" fill="#fff" stroke="#848484"/><path d="M2 4.5h5 M4.5 2v5" stroke="#000" stroke-width="1"/></svg>
<svg style="left:58px;top:540px" width="16" height="16" viewBox="0 0 16 16"><path d="M0.5 2.5V14H15.5V3.5H7.5L6.5 1.5H1.5Z" fill="url(#gf)" stroke="#b08a2c" stroke-width="1"/><path d="M0.5 14.5H15.8M15.5 4V14.5" stroke="#86661a" stroke-width="1.1" fill="none"/><path d="M1.5 4.5H14.5M1.5 4.5V13" stroke="#fffbd8" stroke-width="1" opacity="0.55" fill="none"/><g opacity="0.8"><rect x="4.5" y="5.5" width="3" height="7.5" rx="0.8" fill="#e87050" stroke="#b85030" stroke-width="0.5"/><rect x="8.3" y="5.5" width="3" height="7.5" rx="0.8" fill="#88bc50" stroke="#5a8c30" stroke-width="0.5"/><path d="M6 6v6.5M9.8 6v6.5" stroke="#f8e8a0" stroke-width="0.8"/></g></svg>
<span class="t" style="left:78.7px;top:541px;font-size:12px;transform:scaleX(0.892);transform-origin:0 50%;">Modbus TCP Server (v1.0)</span>
<div style="left:48px;top:564px;width:10px;height:1px;background-image:repeating-linear-gradient(90deg,#808080 0 1px,transparent 1px 2px);"></div>
<svg style="left:43px;top:560px" width="9" height="9" viewBox="0 0 9 9"><rect x="0.5" y="0.5" width="8" height="8" fill="#fff" stroke="#848484"/><path d="M2 4.5h5 M4.5 2v5" stroke="#000" stroke-width="1"/></svg>
<svg style="left:58px;top:556px" width="16" height="16" viewBox="0 0 16 16"><path d="M0.5 2.5V14H15.5V3.5H7.5L6.5 1.5H1.5Z" fill="url(#gf)" stroke="#b08a2c" stroke-width="1"/><path d="M0.5 14.5H15.8M15.5 4V14.5" stroke="#86661a" stroke-width="1.1" fill="none"/><path d="M1.5 4.5H14.5M1.5 4.5V13" stroke="#fffbd8" stroke-width="1" opacity="0.55" fill="none"/><g opacity="0.8"><rect x="4.5" y="5.5" width="3" height="7.5" rx="0.8" fill="#e87050" stroke="#b85030" stroke-width="0.5"/><rect x="8.3" y="5.5" width="3" height="7.5" rx="0.8" fill="#88bc50" stroke="#5a8c30" stroke-width="0.5"/><path d="M6 6v6.5M9.8 6v6.5" stroke="#f8e8a0" stroke-width="0.8"/></g></svg>
<span class="t" style="left:78.7px;top:557px;font-size:12px;transform:scaleX(0.876);transform-origin:0 50%;">Open User Communication (v1.0)</span>
<div style="left:48px;top:580px;width:10px;height:1px;background-image:repeating-linear-gradient(90deg,#808080 0 1px,transparent 1px 2px);"></div>
<svg style="left:43px;top:576px" width="9" height="9" viewBox="0 0 9 9"><rect x="0.5" y="0.5" width="8" height="8" fill="#fff" stroke="#848484"/><path d="M2 4.5h5 M4.5 2v5" stroke="#000" stroke-width="1"/></svg>
<svg style="left:58px;top:572px" width="16" height="16" viewBox="0 0 16 16"><path d="M0.5 2.5V14H15.5V3.5H7.5L6.5 1.5H1.5Z" fill="url(#gf)" stroke="#b08a2c" stroke-width="1"/><path d="M0.5 14.5H15.8M15.5 4V14.5" stroke="#86661a" stroke-width="1.1" fill="none"/><path d="M1.5 4.5H14.5M1.5 4.5V13" stroke="#fffbd8" stroke-width="1" opacity="0.55" fill="none"/><g opacity="0.8"><rect x="4.5" y="5.5" width="3" height="7.5" rx="0.8" fill="#e87050" stroke="#b85030" stroke-width="0.5"/><rect x="8.3" y="5.5" width="3" height="7.5" rx="0.8" fill="#88bc50" stroke="#5a8c30" stroke-width="0.5"/><path d="M6 6v6.5M9.8 6v6.5" stroke="#f8e8a0" stroke-width="0.8"/></g></svg>
<span class="t" style="left:78.7px;top:573px;font-size:12px;transform:scaleX(0.905);transform-origin:0 50%;">PN Read Write Record (v1.0)</span>
<div style="left:48px;top:596px;width:10px;height:1px;background-image:repeating-linear-gradient(90deg,#808080 0 1px,transparent 1px 2px);"></div>
<svg style="left:43px;top:592px" width="9" height="9" viewBox="0 0 9 9"><rect x="0.5" y="0.5" width="8" height="8" fill="#fff" stroke="#848484"/><path d="M2 4.5h5" stroke="#000" stroke-width="1"/></svg>
<svg style="left:58px;top:588px" width="16" height="16" viewBox="0 0 16 16"><path d="M0.5 2.5V14H15.5V3.5H7.5L6.5 1.5H1.5Z" fill="url(#gf)" stroke="#b08a2c" stroke-width="1"/><path d="M0.5 14.5H15.8M15.5 4V14.5" stroke="#86661a" stroke-width="1.1" fill="none"/><path d="M1.5 4.5H14.5M1.5 4.5V13" stroke="#fffbd8" stroke-width="1" opacity="0.55" fill="none"/><g opacity="0.8"><rect x="4.5" y="5.5" width="3" height="7.5" rx="0.8" fill="#e87050" stroke="#b85030" stroke-width="0.5"/><rect x="8.3" y="5.5" width="3" height="7.5" rx="0.8" fill="#88bc50" stroke="#5a8c30" stroke-width="0.5"/><path d="M6 6v6.5M9.8 6v6.5" stroke="#f8e8a0" stroke-width="0.8"/></g></svg>
<span class="t" style="left:78.7px;top:589px;font-size:12px;transform:scaleX(0.880);transform-origin:0 50%;">SINAMICS Control (v1.1)</span>
<div style="left:67px;top:612px;width:11px;height:1px;background-image:repeating-linear-gradient(90deg,#808080 0 1px,transparent 1px 2px);"></div>
<svg style="left:78px;top:604px" width="16" height="16" viewBox="0 0 16 16"><path d="M2.5 2.5h8v11h-8z" fill="#fff" stroke="#3a72e0" stroke-width="1.2"/><path d="M0.5 4.5h2M0.5 11.5h2M10.5 3.5h2" stroke="#3a72e0" stroke-width="1.2"/></svg>
<span class="t" style="left:97.7px;top:605px;font-size:12px;transform:scaleX(0.883);transform-origin:0 50%;">SINA_POS</span>
<div style="left:67px;top:628px;width:11px;height:1px;background-image:repeating-linear-gradient(90deg,#808080 0 1px,transparent 1px 2px);"></div>
<svg style="left:78px;top:620px" width="16" height="16" viewBox="0 0 16 16"><path d="M2.5 2.5h8v11h-8z" fill="#fff" stroke="#3a72e0" stroke-width="1.2"/><path d="M0.5 4.5h2M0.5 11.5h2M10.5 3.5h2" stroke="#3a72e0" stroke-width="1.2"/></svg>
<span class="t" style="left:97.7px;top:621px;font-size:12px;transform:scaleX(0.889);transform-origin:0 50%;">SINA_SPEED</span>
<div style="left:48px;top:644px;width:10px;height:1px;background-image:repeating-linear-gradient(90deg,#808080 0 1px,transparent 1px 2px);"></div>
<svg style="left:43px;top:640px" width="9" height="9" viewBox="0 0 9 9"><rect x="0.5" y="0.5" width="8" height="8" fill="#fff" stroke="#848484"/><path d="M2 4.5h5 M4.5 2v5" stroke="#000" stroke-width="1"/></svg>
<svg style="left:58px;top:636px" width="16" height="16" viewBox="0 0 16 16"><path d="M0.5 2.5V14H15.5V3.5H7.5L6.5 1.5H1.5Z" fill="url(#gf)" stroke="#b08a2c" stroke-width="1"/><path d="M0.5 14.5H15.8M15.5 4V14.5" stroke="#86661a" stroke-width="1.1" fill="none"/><path d="M1.5 4.5H14.5M1.5 4.5V13" stroke="#fffbd8" stroke-width="1" opacity="0.55" fill="none"/><g opacity="0.8"><rect x="4.5" y="5.5" width="3" height="7.5" rx="0.8" fill="#e87050" stroke="#b85030" stroke-width="0.5"/><rect x="8.3" y="5.5" width="3" height="7.5" rx="0.8" fill="#88bc50" stroke="#5a8c30" stroke-width="0.5"/><path d="M6 6v6.5M9.8 6v6.5" stroke="#f8e8a0" stroke-width="0.8"/></g></svg>
<span class="t" style="left:78.7px;top:637px;font-size:12px;transform:scaleX(0.876);transform-origin:0 50%;">SINAMICS Parameter (v1.0)</span>
<div style="left:48px;top:660px;width:10px;height:1px;background-image:repeating-linear-gradient(90deg,#808080 0 1px,transparent 1px 2px);"></div>
<svg style="left:43px;top:656px" width="9" height="9" viewBox="0 0 9 9"><rect x="0.5" y="0.5" width="8" height="8" fill="#fff" stroke="#848484"/><path d="M2 4.5h5 M4.5 2v5" stroke="#000" stroke-width="1"/></svg>
<svg style="left:58px;top:652px" width="16" height="16" viewBox="0 0 16 16"><path d="M0.5 2.5V14H15.5V3.5H7.5L6.5 1.5H1.5Z" fill="url(#gf)" stroke="#b08a2c" stroke-width="1"/><path d="M0.5 14.5H15.8M15.5 4V14.5" stroke="#86661a" stroke-width="1.1" fill="none"/><path d="M1.5 4.5H14.5M1.5 4.5V13" stroke="#fffbd8" stroke-width="1" opacity="0.55" fill="none"/><g opacity="0.8"><rect x="4.5" y="5.5" width="3" height="7.5" rx="0.8" fill="#e87050" stroke="#b85030" stroke-width="0.5"/><rect x="8.3" y="5.5" width="3" height="7.5" rx="0.8" fill="#88bc50" stroke="#5a8c30" stroke-width="0.5"/><path d="M6 6v6.5M9.8 6v6.5" stroke="#f8e8a0" stroke-width="0.8"/></g></svg>
<span class="t" style="left:78.7px;top:653px;font-size:12px;transform:scaleX(0.896);transform-origin:0 50%;">USS Protocol (v2.1)</span>
<div style="left:48px;top:676px;width:10px;height:1px;background-image:repeating-linear-gradient(90deg,#808080 0 1px,transparent 1px 2px);"></div>
<svg style="left:43px;top:672px" width="9" height="9" viewBox="0 0 9 9"><rect x="0.5" y="0.5" width="8" height="8" fill="#fff" stroke="#848484"/><path d="M2 4.5h5 M4.5 2v5" stroke="#000" stroke-width="1"/></svg>
<svg style="left:58px;top:668px" width="16" height="16" viewBox="0 0 16 16"><path d="M0.5 2.5V14H15.5V3.5H7.5L6.5 1.5H1.5Z" fill="url(#gf)" stroke="#b08a2c" stroke-width="1"/><path d="M0.5 14.5H15.8M15.5 4V14.5" stroke="#86661a" stroke-width="1.1" fill="none"/><path d="M1.5 4.5H14.5M1.5 4.5V13" stroke="#fffbd8" stroke-width="1" opacity="0.55" fill="none"/><g opacity="0.8"><rect x="4.5" y="5.5" width="3" height="7.5" rx="0.8" fill="#e87050" stroke="#b85030" stroke-width="0.5"/><rect x="8.3" y="5.5" width="3" height="7.5" rx="0.8" fill="#88bc50" stroke="#5a8c30" stroke-width="0.5"/><path d="M6 6v6.5M9.8 6v6.5" stroke="#f8e8a0" stroke-width="0.8"/></g></svg>
<div style="left:78px;top:668px;width:60px;height:3px;background:#dcdcdc;"></div>
<div style="left:39px;top:586px;width:167px;height:50px;border:2px solid #f42a0c;"></div>
<div style="left:334px;top:0px;width:547px;height:27px;background:linear-gradient(#d6d7da 0%,#c6c8cc 50%,#b0b2b7 80%,#a3a6ac 100%);"></div>
<div style="left:334px;top:0px;width:547px;height:1.5px;background:#707070;"></div>
<div style="left:334px;top:27px;width:547px;height:19px;background:linear-gradient(#a3a6ac,#bcbec3);"></div>
<div style="left:338px;top:47px;width:543px;height:624px;background:#fff;"></div>
<div style="left:334px;top:47px;width:3px;height:624px;background:linear-gradient(90deg,#c4d0ec,#e8eefa);"></div>
<div style="left:337px;top:47px;width:23px;height:624px;background:conic-gradient(#d2d2d2 25%,#fff 0 50%,#d2d2d2 0 75%,#fff 0) 0 0/2px 2px;"></div>
<div style="left:363px;top:47px;width:2px;height:546px;background:#000;"></div>
<div style="left:363px;top:602px;width:2px;height:69px;background:#000;"></div>
<svg style="left:340px;top:6px" width="15" height="15" viewBox="0 0 15 15"><circle cx="7.5" cy="7.5" r="7" fill="url(#gg)" stroke="#2a8a20" stroke-width="0.8"/><path d="M5.5 3.5L11.5 7.5L5.5 11.5Z" fill="#fff"/></svg>
<svg style="left:362px;top:6px" width="15" height="15" viewBox="0 0 15 15"><circle cx="7.5" cy="7.5" r="7" fill="url(#gr)" stroke="#b03010" stroke-width="0.8"/><rect x="4.5" y="4.5" width="6" height="6" rx="1" fill="#fff"/></svg>
<svg style="left:383px;top:4px" width="18" height="18" viewBox="0 0 18 18"><path d="M2.5 3.5h7l2 2v10h-9z" fill="url(#gb)" stroke="#5070b0"/><path d="M5.5 1.5h6l2 2v9" fill="none" stroke="#5070b0"/><path d="M5 9L8 13L15 2" fill="none" stroke="#28a828" stroke-width="2"/></svg>
<div style="left:405px;top:6px;width:1px;height:15px;background:#6c7078;"></div>
<div style="left:406px;top:6px;width:1px;height:15px;background:#e8eaee;"></div>
<svg style="left:416px;top:5px" width="15" height="16" viewBox="0 0 15 16"><path d="M7.5 0.5L14.5 8H10.5V15.5H4.5V8H0.5Z" fill="#3aa0f0" stroke="#1a70c8" stroke-width="1"/><path d="M7.5 2.5L11.5 7H9V14" fill="none" stroke="#a8dcff" stroke-width="1"/></svg>
<span class="t cj yh" style="left:435px;top:6px;">上传</span>
<svg style="left:469px;top:12px" width="6" height="4" viewBox="0 0 6 4"><path d="M0 0H6L3 3.5Z" fill="#5a5a5a"/></svg>
<svg style="left:483px;top:5px" width="15" height="16" viewBox="0 0 15 16"><path d="M7.5 15.5L14.5 8H10.5V0.5H4.5V8H0.5Z" fill="#38b030" stroke="#1a8018" stroke-width="1"/><path d="M6 2V9H3.5" fill="none" stroke="#a8f090" stroke-width="1"/></svg>
<span class="t cj yh" style="left:502px;top:6px;">下载</span>
<svg style="left:535px;top:12px" width="6" height="4" viewBox="0 0 6 4"><path d="M0 0H6L3 3.5Z" fill="#5a5a5a"/></svg>
<div style="left:548px;top:6px;width:1px;height:15px;background:#6c7078;"></div>
<div style="left:549px;top:6px;width:1px;height:15px;background:#e8eaee;"></div>
<svg style="left:556px;top:5px" width="18" height="17" viewBox="0 0 18 17"><path d="M1.5 2V16" stroke="#000" stroke-width="1.4"/><path d="M2 12.5H5M6 10.5v4M9 10.5v4M10 12.5h3" stroke="#222" stroke-width="1"/><path d="M13 10.5Q15 12.5 13 14.5" fill="none" stroke="#222" stroke-width="1"/><path d="M7 5.5L11 1.5V4H15.5V7H11V9.5Z" fill="#48b838" stroke="#2a8a20" stroke-width="0.6"/></svg>
<span class="t cj yh" style="left:577px;top:6px;">插入</span>
<svg style="left:610px;top:12px" width="6" height="4" viewBox="0 0 6 4"><path d="M0 0H6L3 3.5Z" fill="#5a5a5a"/></svg>
<svg style="left:624px;top:5px" width="18" height="17" viewBox="0 0 18 17"><path d="M1.5 2V16" stroke="#000" stroke-width="1.4"/><path d="M2 4.5H5M6 2.5v4M9 2.5v4M10 4.5h3" stroke="#222" stroke-width="1"/><path d="M13 2.5Q15 4.5 13 6.5" fill="none" stroke="#222" stroke-width="1"/><path d="M8 8L15 15M15 8L8 15" stroke="#e01010" stroke-width="2.2"/></svg>
<span class="t cj yh" style="left:644px;top:6px;">删除</span>
<svg style="left:678px;top:12px" width="6" height="4" viewBox="0 0 6 4"><path d="M0 0H6L3 3.5Z" fill="#5a5a5a"/></svg>
<div style="left:690px;top:6px;width:1px;height:15px;background:#6c7078;"></div>
<div style="left:691px;top:6px;width:1px;height:15px;background:#e8eaee;"></div>
<svg style="left:696px;top:4px" width="18" height="18" viewBox="0 0 18 18"><rect x="4.5" y="1.5" width="12" height="12" fill="#eef4ff" stroke="#2a66d4" stroke-width="1"/><rect x="4.5" y="1.5" width="12" height="2.5" fill="#2a66d4"/><rect x="1" y="1" width="3.6" height="3.4" fill="#fff" stroke="#2a66d4" stroke-width="1.1"/><rect x="4" y="4.5" width="3.6" height="3.4" fill="#fff" stroke="#2a66d4" stroke-width="1.1"/><rect x="7" y="8" width="3.6" height="3.4" fill="#fff" stroke="#2a66d4" stroke-width="1.1"/><rect x="10" y="11.5" width="3.6" height="3.4" fill="#fff" stroke="#2a66d4" stroke-width="1.1"/><path d="M0.5 9L4.5 12.5L0.5 16.5Z" fill="#3cae3c"/></svg>
<svg style="left:719px;top:4px" width="18" height="18" viewBox="0 0 18 18"><rect x="4.5" y="1.5" width="12" height="12" fill="#b4b4b4" stroke="#7a7a7a" stroke-width="1"/><rect x="4.5" y="1.5" width="12" height="2.5" fill="#7a7a7a"/><rect x="1" y="1" width="3.6" height="3.4" fill="#c4c4c4" stroke="#7a7a7a" stroke-width="1.1"/><rect x="4" y="4.5" width="3.6" height="3.4" fill="#c4c4c4" stroke="#7a7a7a" stroke-width="1.1"/><rect x="7" y="8" width="3.6" height="3.4" fill="#c4c4c4" stroke="#7a7a7a" stroke-width="1.1"/><rect x="10" y="11.5" width="3.6" height="3.4" fill="#c4c4c4" stroke="#7a7a7a" stroke-width="1.1"/><path d="M1.5 10.5v6M4.5 10.5v6" stroke="#6a6a6a" stroke-width="2"/></svg>
<div style="left:742px;top:6px;width:1px;height:15px;background:#6c7078;"></div>
<div style="left:743px;top:6px;width:1px;height:15px;background:#e8eaee;"></div>
<svg style="left:750px;top:10px" width="15" height="10" viewBox="0 0 15 10"><rect x="0.7" y="0.7" width="13.6" height="8.6" rx="2.5" fill="url(#gb)" stroke="#3a6cd0" stroke-width="1.4"/></svg>
<svg style="left:771px;top:5px" width="17" height="15" viewBox="0 0 17 15"><rect x="2.7" y="6.7" width="13.6" height="7.6" rx="2.5" fill="url(#gb)" stroke="#3a6cd0" stroke-width="1.4"/><path d="M0.5 5L5.5 0.8V3H11.5V7H5.5V9.2Z" fill="#3a70d8" stroke="#2050a8" stroke-width="0.6"/></svg>
<svg style="left:793px;top:5px" width="17" height="15" viewBox="0 0 17 15"><rect x="0.7" y="6.7" width="13.6" height="7.6" rx="2.5" fill="url(#gb)" stroke="#3a6cd0" stroke-width="1.4"/><path d="M16.5 5L11.5 0.8V3H5.5V7H11.5V9.2Z" fill="#3a70d8" stroke="#2050a8" stroke-width="0.6"/></svg>
<svg style="left:815px;top:4px" width="17" height="16" viewBox="0 0 17 16"><rect x="3.7" y="8.7" width="12.6" height="6.6" rx="2.5" fill="url(#gb)" stroke="#3a6cd0" stroke-width="1.2"/><rect x="0.7" y="6.7" width="12.6" height="6.6" rx="2.5" fill="url(#gb)" stroke="#3a6cd0" stroke-width="1.2"/><path d="M2.5 1L9.5 8.5M9.5 1L2.5 8.5" stroke="#e01010" stroke-width="1.8"/></svg>
<div style="left:838px;top:6px;width:1px;height:15px;background:#6c7078;"></div>
<div style="left:839px;top:6px;width:1px;height:15px;background:#e8eaee;"></div>
<svg style="left:846px;top:6px" width="14" height="14" viewBox="0 0 14 14"><rect x="0.5" y="0.5" width="13" height="13" rx="1.5" fill="#2aa030" stroke="#1a7820"/><path d="M3 7H10M7 3.5L10.5 7L7 10.5" fill="none" stroke="#fff" stroke-width="1.6"/></svg>
<div style="left:867px;top:6px;width:1px;height:15px;background:#6c7078;"></div>
<div style="left:868px;top:6px;width:1px;height:15px;background:#e8eaee;"></div>
<svg style="left:875px;top:8px" width="8" height="12" viewBox="0 0 8 12"><rect x="0.5" y="4.5" width="9" height="7" fill="#909090" stroke="#606060"/><path d="M2 4.5V3Q2 0.5 5 0.5" fill="none" stroke="#707070" stroke-width="1.4"/></svg>
<div style="left:334px;top:45px;width:547px;height:2px;background:linear-gradient(#aaacb0 0 50%,#e6eaf2 50% 100%);"></div>
<div style="left:440px;top:28px;width:57px;height:17px;background:linear-gradient(#fff2b4 0%,#fff2b4 35%,#f8d468 60%,#f8d468 100%);border:1px solid #b4b8c0;border-bottom:none;border-radius:4px 4px 0 0;"></div>
<span class="t" style="left:456px;top:29.5px;color:#15152a;font-size:12px;transform:scaleX(0.841);transform-origin:0 50%;">SBR_0</span>
<div style="left:497px;top:28px;width:58px;height:17px;background:linear-gradient(#e8f0d4 0%,#e8f0d4 35%,#c6d6a6 60%,#c6d6a6 100%);border:1px solid #b4b8c0;border-bottom:none;border-radius:4px 4px 0 0;"></div>
<span class="t" style="left:513px;top:29.5px;color:#15152a;font-size:12px;transform:scaleX(0.815);transform-origin:0 50%;">SBR_1</span>
<div style="left:555px;top:28px;width:77px;height:17px;background:linear-gradient(#fcd2d2 0%,#fcd2d2 35%,#f0a0a0 60%,#f0a0a0 100%);border:1px solid #b4b8c0;border-bottom:none;border-radius:4px 4px 0 0;"></div>
<span class="t" style="left:571px;top:29.5px;color:#15152a;font-size:12px;transform:scaleX(0.841);transform-origin:0 50%;">SINA_POS</span>
<div style="left:632px;top:28px;width:55px;height:17px;background:linear-gradient(#e6dcf8 0%,#e6dcf8 35%,#bcaae2 60%,#bcaae2 100%);border:1px solid #b4b8c0;border-bottom:none;border-radius:4px 4px 0 0;"></div>
<span class="t" style="left:648.5px;top:29.5px;color:#15152a;font-size:12px;transform:scaleX(0.857);transform-origin:0 50%;">INT_0</span>
<div style="left:334px;top:27px;width:64px;height:18px;background:linear-gradient(90deg,rgba(255,255,255,0.4),rgba(255,255,255,0));"></div>
<svg style="left:340px;top:27px" width="102" height="20" viewBox="0 0 102 20"><path d="M11 20 L33 1 H98 Q100 1 100 3 V20 Z" fill="url(#gm)"/><path d="M11 20 L33 1 H98 Q100 1 100 3 V20" fill="none" stroke="#9aa4b8" stroke-width="1"/></svg>
<span class="t" style="left:385px;top:29.299999999999997px;font-weight:bold;font-size:13px;transform:scaleX(0.918);transform-origin:0 50%;">MAIN</span>
<svg style="left:427px;top:34px" width="8" height="8" viewBox="0 0 8 8"><path d="M0.5 0.5L7.5 7.5M7.5 0.5L0.5 7.5" stroke="#333" stroke-width="1.4"/></svg>
<svg style="left:341px;top:32px" width="6" height="10" viewBox="0 0 6 10"><path d="M5 1L1 5L5 9Z" fill="none" stroke="#666" stroke-width="1"/></svg>
<div style="left:338px;top:47px;width:543px;height:12px;overflow:hidden;"><span class="t cj" style="left:34px;top:-8.5px;font-size:13px;color:#808080;">输入注释</span><span class="t" style="left:8px;top:-9px;font-weight:bold;font-size:12px;">2</span></div>
<div style="left:353px;top:56px;width:434px;height:277px;border:2px solid #f42a0c;"></div>
<span class="t" style="left:371.7px;top:63px;font-size:12px;transform:scaleX(0.896);transform-origin:0 50%;">Always_On:SM0.0</span>
<div style="left:365px;top:87px;width:34px;height:2px;background:#000;"></div>
<div style="left:398px;top:79px;width:2px;height:18px;background:#000;"></div>
<div style="left:429px;top:79px;width:2px;height:18px;background:#000;"></div>
<div style="left:431px;top:87px;width:140px;height:2px;background:#000;"></div>
<div style="left:570px;top:62px;width:92px;height:249px;border:2px solid #000;"></div>
<span class="t" style="left:589px;top:63px;font-size:12px;transform:scaleX(0.900);transform-origin:0 50%;">SINA_POS</span>
<span class="t" style="left:573.5px;top:80.5px;font-size:12px;transform:scaleX(0.900);transform-origin:0 50%;">EN</span>
<span class="t r" style="right:316.5px;top:117px;font-size:12px;transform:scaleX(0.913);transform-origin:100% 50%;">Mode:VW7000</span>
<div style="left:566px;top:124px;width:4px;height:2px;background:#000;"></div>
<span class="t" style="left:573px;top:117px;font-size:12px;transform:scaleX(0.933);transform-origin:0 50%;">ModeP~</span>
<span class="t r" style="right:221.5px;top:117px;font-size:12px;transform:scaleX(0.963);transform-origin:100% 50%;">ActVel~</span>
<div style="left:662px;top:124px;width:4px;height:2px;background:#000;"></div>
<span class="t" style="left:667.5px;top:117px;font-size:12px;transform:scaleX(0.904);transform-origin:0 50%;">ActVel:VD7024</span>
<span class="t r" style="right:316.5px;top:135px;font-size:12px;transform:scaleX(0.896);transform-origin:100% 50%;">SetPos:VD7002</span>
<div style="left:566px;top:142px;width:4px;height:2px;background:#000;"></div>
<span class="t" style="left:573px;top:135px;font-size:12px;transform:scaleX(0.866);transform-origin:0 50%;">Position</span>
<span class="t r" style="right:221.5px;top:135px;font-size:12px;transform:scaleX(0.922);transform-origin:100% 50%;">ActPosi~</span>
<div style="left:662px;top:142px;width:4px;height:2px;background:#000;"></div>
<span class="t" style="left:667.5px;top:135px;font-size:12px;transform:scaleX(0.909);transform-origin:0 50%;">ActPos:VD7020</span>
<span class="t r" style="right:316.5px;top:153px;font-size:12px;transform:scaleX(0.909);transform-origin:100% 50%;">SetVel:VD7006</span>
<div style="left:566px;top:160px;width:4px;height:2px;background:#000;"></div>
<span class="t" style="left:573px;top:153px;font-size:12px;transform:scaleX(0.895);transform-origin:0 50%;">Velocity</span>
<span class="t r" style="right:221.5px;top:153px;font-size:12px;transform:scaleX(0.955);transform-origin:100% 50%;">Warn_~</span>
<div style="left:662px;top:160px;width:4px;height:2px;background:#000;"></div>
<span class="t" style="left:667.5px;top:153px;font-size:12px;transform:scaleX(0.934);transform-origin:0 50%;">VW7028</span>
<span class="t r" style="right:316.5px;top:171px;font-size:12px;transform:scaleX(0.896);transform-origin:100% 50%;">Enable:V7010.0</span>
<div style="left:566px;top:178px;width:4px;height:2px;background:#000;"></div>
<span class="t" style="left:573px;top:171px;font-size:12px;transform:scaleX(0.901);transform-origin:0 50%;">Enable~</span>
<span class="t r" style="right:221.5px;top:171px;font-size:12px;transform:scaleX(0.917);transform-origin:100% 50%;">Fault_c~</span>
<div style="left:662px;top:178px;width:4px;height:2px;background:#000;"></div>
<span class="t" style="left:667.5px;top:171px;font-size:12px;transform:scaleX(0.898);transform-origin:0 50%;">FaultCode:VW7030</span>
<span class="t r" style="right:316.5px;top:189px;font-size:12px;transform:scaleX(0.880);transform-origin:100% 50%;">Cancel:V7010.1</span>
<div style="left:566px;top:196px;width:4px;height:2px;background:#000;"></div>
<span class="t" style="left:573px;top:189px;font-size:12px;transform:scaleX(0.890);transform-origin:0 50%;">Cancel~</span>
<span class="t r" style="right:221.5px;top:189px;font-size:12px;transform:scaleX(0.924);transform-origin:100% 50%;">Done</span>
<div style="left:662px;top:196px;width:4px;height:2px;background:#000;"></div>
<span class="t" style="left:667.5px;top:189px;font-size:12px;transform:scaleX(0.912);transform-origin:0 50%;">Done:V7032.0</span>
<span class="t r" style="right:316.5px;top:207px;font-size:12px;transform:scaleX(0.906);transform-origin:100% 50%;">IntMStop:V7010.2</span>
<div style="left:566px;top:214px;width:4px;height:2px;background:#000;"></div>
<span class="t" style="left:573px;top:207px;font-size:12px;transform:scaleX(0.891);transform-origin:0 50%;">Interme~</span>
<span class="t r" style="right:316.5px;top:225px;font-size:12px;transform:scaleX(0.897);transform-origin:100% 50%;">Start:V7010.3</span>
<div style="left:566px;top:232px;width:4px;height:2px;background:#000;"></div>
<span class="t" style="left:573px;top:225px;font-size:12px;transform:scaleX(0.899);transform-origin:0 50%;">Execute</span>
<span class="t r" style="right:316.5px;top:243px;font-size:12px;transform:scaleX(0.876);transform-origin:100% 50%;">&amp;IB128</span>
<div style="left:566px;top:250px;width:4px;height:2px;background:#000;"></div>
<span class="t" style="left:573px;top:243px;font-size:12px;transform:scaleX(0.899);transform-origin:0 50%;">St_I_add</span>
<span class="t r" style="right:316.5px;top:261px;font-size:12px;transform:scaleX(0.882);transform-origin:100% 50%;">&amp;QB128</span>
<div style="left:566px;top:268px;width:4px;height:2px;background:#000;"></div>
<span class="t" style="left:573px;top:261px;font-size:12px;transform:scaleX(0.906);transform-origin:0 50%;">St_Q_a~</span>
<span class="t r" style="right:316.5px;top:279px;font-size:12px;transform:scaleX(0.888);transform-origin:100% 50%;">&amp;CtrlTab~:&amp;VD8000</span>
<div style="left:566px;top:286px;width:4px;height:2px;background:#000;"></div>
<span class="t" style="left:573px;top:279px;font-size:12px;transform:scaleX(0.875);transform-origin:0 50%;">Control~</span>
<span class="t r" style="right:316.5px;top:297px;font-size:12px;transform:scaleX(0.887);transform-origin:100% 50%;">&amp;Status~:&amp;VD7500</span>
<div style="left:566px;top:304px;width:4px;height:2px;background:#000;"></div>
<span class="t" style="left:573px;top:297px;font-size:12px;transform:scaleX(0.906);transform-origin:0 50%;">Status_~</span>
<div style="left:370px;top:354px;width:477px;height:229px;border:1px solid #808080;background:#fff;"></div>
<div style="left:371px;top:355px;width:475px;height:16px;background:linear-gradient(#ececec,#c6c6c6 40%,#929292);"></div>
<div style="left:496px;top:354px;width:1px;height:229px;background:#808080;"></div>
<div style="left:595px;top:354px;width:1px;height:229px;background:#808080;"></div>
<div style="left:370px;top:371px;width:477px;height:1px;background:#707070;"></div>
<div style="left:370px;top:386px;width:477px;height:1px;background:#8c8c8c;"></div>
<div style="left:370px;top:401px;width:477px;height:1px;background:#8c8c8c;"></div>
<div style="left:370px;top:416px;width:477px;height:1px;background:#8c8c8c;"></div>
<div style="left:370px;top:431px;width:477px;height:1px;background:#8c8c8c;"></div>
<div style="left:370px;top:446px;width:477px;height:1px;background:#8c8c8c;"></div>
<div style="left:370px;top:461px;width:477px;height:1px;background:#8c8c8c;"></div>
<div style="left:370px;top:476px;width:477px;height:1px;background:#8c8c8c;"></div>
<div style="left:370px;top:491px;width:477px;height:1px;background:#8c8c8c;"></div>
<div style="left:370px;top:506px;width:477px;height:1px;background:#8c8c8c;"></div>
<div style="left:370px;top:521px;width:477px;height:1px;background:#8c8c8c;"></div>
<div style="left:370px;top:536px;width:477px;height:1px;background:#8c8c8c;"></div>
<div style="left:370px;top:551px;width:477px;height:1px;background:#8c8c8c;"></div>
<div style="left:370px;top:566px;width:477px;height:1px;background:#8c8c8c;"></div>
<span class="t cj" style="left:375px;top:356.5px;">符号</span>
<span class="t cj" style="left:501px;top:356.5px;">地址</span>
<span class="t cj" style="left:600px;top:356.5px;">注释</span>
<span class="t" style="left:375px;top:372.5px;font-size:12px;transform:scaleX(0.929);transform-origin:0 50%;">ActPos</span>
<span class="t" style="left:500.5px;top:372.5px;font-size:12px;transform:scaleX(0.899);transform-origin:0 50%;">VD7020</span>
<span class="t" style="left:375px;top:387.5px;font-size:12px;transform:scaleX(0.905);transform-origin:0 50%;">ActVel</span>
<span class="t" style="left:500.5px;top:387.5px;font-size:12px;transform:scaleX(0.899);transform-origin:0 50%;">VD7024</span>
<span class="t" style="left:375px;top:402.5px;font-size:12px;transform:scaleX(0.898);transform-origin:0 50%;">Always_On</span>
<span class="t" style="left:500.5px;top:402.5px;font-size:12px;transform:scaleX(0.908);transform-origin:0 50%;">SM0.0</span>
<span class="t" style="left:375px;top:417.5px;font-size:12px;transform:scaleX(0.923);transform-origin:0 50%;">Cancel</span>
<span class="t" style="left:500.5px;top:417.5px;font-size:12px;transform:scaleX(0.890);transform-origin:0 50%;">V7010.1</span>
<span class="t" style="left:375px;top:432.5px;font-size:12px;transform:scaleX(0.914);transform-origin:0 50%;">CtrlTable</span>
<span class="t" style="left:500.5px;top:432.5px;font-size:12px;transform:scaleX(0.899);transform-origin:0 50%;">VD8000</span>
<span class="t" style="left:375px;top:447.5px;font-size:12px;transform:scaleX(0.941);transform-origin:0 50%;">Done</span>
<span class="t" style="left:500.5px;top:447.5px;font-size:12px;transform:scaleX(0.890);transform-origin:0 50%;">V7032.0</span>
<span class="t" style="left:375px;top:462.5px;font-size:12px;transform:scaleX(0.890);transform-origin:0 50%;">Enable</span>
<span class="t" style="left:500.5px;top:462.5px;font-size:12px;transform:scaleX(0.890);transform-origin:0 50%;">V7010.0</span>
<span class="t" style="left:375px;top:477.5px;font-size:12px;transform:scaleX(0.890);transform-origin:0 50%;">FaultCode</span>
<span class="t" style="left:500.5px;top:477.5px;font-size:12px;transform:scaleX(0.890);transform-origin:0 50%;">VW7030</span>
<span class="t" style="left:375px;top:492.5px;font-size:12px;transform:scaleX(0.890);transform-origin:0 50%;">IntMStop</span>
<span class="t" style="left:500.5px;top:492.5px;font-size:12px;transform:scaleX(0.890);transform-origin:0 50%;">V7010.2</span>
<span class="t" style="left:375px;top:507.5px;font-size:12px;transform:scaleX(0.890);transform-origin:0 50%;">Mode</span>
<span class="t" style="left:500.5px;top:507.5px;font-size:12px;transform:scaleX(0.890);transform-origin:0 50%;">VW7000</span>
<span class="t" style="left:375px;top:522.5px;font-size:12px;transform:scaleX(0.890);transform-origin:0 50%;">SetPos</span>
<span class="t" style="left:500.5px;top:522.5px;font-size:12px;transform:scaleX(0.899);transform-origin:0 50%;">VD7002</span>
<span class="t" style="left:375px;top:537.5px;font-size:12px;transform:scaleX(0.890);transform-origin:0 50%;">SetVel</span>
<span class="t" style="left:500.5px;top:537.5px;font-size:12px;transform:scaleX(0.899);transform-origin:0 50%;">VD7006</span>
<span class="t" style="left:375px;top:552.5px;font-size:12px;transform:scaleX(0.890);transform-origin:0 50%;">Start</span>
<span class="t" style="left:500.5px;top:552.5px;font-size:12px;transform:scaleX(0.890);transform-origin:0 50%;">V7010.3</span>
<span class="t" style="left:375px;top:567.5px;font-size:12px;transform:scaleX(0.890);transform-origin:0 50%;">StatusTable</span>
<span class="t" style="left:500.5px;top:567.5px;font-size:12px;transform:scaleX(0.899);transform-origin:0 50%;">VD7500</span>
<span class="t cj" style="left:600px;top:402px;color:#008000;text-decoration:underline;text-decoration-thickness:1px;text-underline-offset:1px;">始终接通</span>
<div style="left:337px;top:597px;width:330px;height:2px;background:linear-gradient(90deg,#a0a0a0,#b4b4b4 40%,#fff);"></div>
<span class="t" style="left:345px;top:601px;font-weight:bold;font-size:12px;transform:scaleX(1.047);transform-origin:0 50%;">3</span>
<span class="t cj" style="left:371px;top:602px;color:#808080;">输入注释</span>
<div style="left:365px;top:650px;width:50px;height:2px;background:#000;"></div>
<svg style="left:403px;top:640px" width="14" height="22" viewBox="0 0 14 22"><path d="M2 2 L12 11 L2 20" fill="none" stroke="#000" stroke-width="2"/><path d="M12 1V21" stroke="#000" stroke-width="2"/></svg>
</body></html>
